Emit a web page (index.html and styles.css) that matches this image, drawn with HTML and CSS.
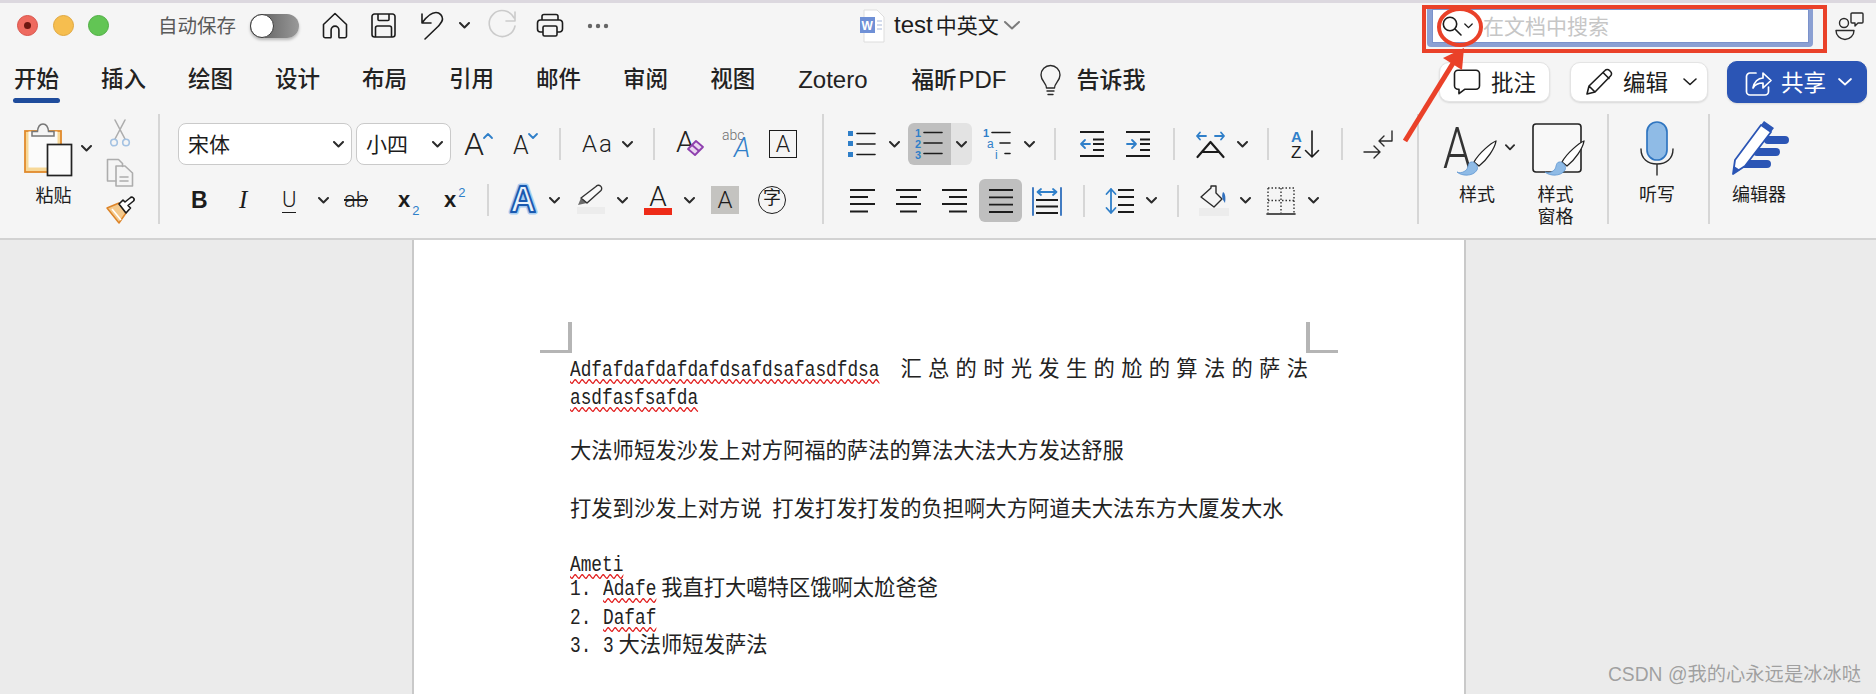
FILE: index.html
```html
<!DOCTYPE html>
<html lang="zh-CN">
<head>
    <meta charset="UTF-8">
    <title>test 中英文</title>
    <link rel="stylesheet" href="styles.css">
</head>
<body>

<svg class="defs" width="0" height="0">
    <symbol id="chev" viewBox="0 0 11 7"><path d="M1 1l4.5 4.5L10 1" class="ln-chev"/></symbol>
    <symbol id="brush" viewBox="0 0 40 36">
        <path d="M39 1C34 3 22 13 17 22l5 4C30 20 38 8 39 1z" class="brush-handle"/>
        <path d="M14 22c-4 1-2 7-6 9-3 2-6 2-8 1 4 4 16 5 20-2 2-3-2-9-6-8z" class="brush-head"/>
    </symbol>
</svg>

<div class="app">
    <div class="topline"></div>

    <!-- title bar -->
    <div class="titlebar">
        <div class="quick">
            <span class="light red"><i></i></span>
            <span class="light yellow"></span>
            <span class="light green"></span>
            <span class="autosave">自动保存</span>
            <span class="toggle"><i></i></span>
            <svg width="26" height="27" viewBox="0 0 26 27"><path class="ln" d="M1.5 12.5L13 1.5l11.5 11V24a1.8 1.8 0 0 1-1.8 1.8h-5a.8.8 0 0 1-.8-.8v-7a3.9 3.9 0 0 0-7.8 0v7a.8.8 0 0 1-.8.8h-5A1.8 1.8 0 0 1 1.5 24z"/></svg>
            <svg width="25" height="25" viewBox="0 0 25 25"><path class="ln" d="M3.5 1h18a2.5 2.5 0 0 1 2.5 2.500v18a2.500 2.500 0 0 1-2.500 2.500h-18A2.500 2.500 0 0 1 1 21.500v-18A2.500 2.500 0 0 1 3.500 1zM7 1v5.500a1 1 0 0 0 1 1h9a1 1 0 0 0 1-1V1M4.500 24v-9a2 2 0 0 1 2-2h12a2 2 0 0 1 2 2v9"/></svg>
            <svg width="24" height="29" viewBox="0 0 24 29"><path class="ln" d="M2 3v9h9M2 12C7 5 12 1.500 16 1.500c4 0 6.500 3.500 6.500 6.500s-2.500 5-4.500 7.500L5 28"/></svg>
            <svg class="chev"><use href="#chev"/></svg>
            <svg width="28" height="29" viewBox="0 0 28 29"><path class="ln-off" d="M26 7A13 13 0 1 0 27 15M27 1v9h-9"/></svg>
            <svg width="28" height="25" viewBox="0 0 28 25"><path class="ln" d="M6 7V3.500A2 2 0 0 1 8 1.500h12a2 2 0 0 1 2 2V7M7 19H4.500A3 3 0 0 1 1.500 16v-6a3 3 0 0 1 3-3h19a3 3 0 0 1 3 3v6a3 3 0 0 1-3 3H21M8.500 13h11a1.500 1.500 0 0 1 1.500 1.500v7a1.500 1.500 0 0 1-1.500 1.500h-11A1.500 1.500 0 0 1 7 21.500v-7A1.500 1.500 0 0 1 8.500 13z"/></svg>
            <svg width="22" height="6" viewBox="0 0 22 6"><circle cx="3" cy="3" r="2.200" class="dot"/><circle cx="11" cy="3" r="2.200" class="dot"/><circle cx="19" cy="3" r="2.200" class="dot"/></svg>
        </div>

        <div class="doctitle">
            <svg width="26" height="34" viewBox="0 0 26 34">
                <path d="M4 1h13l7 7v25H4z" class="page-ico"/>
                <rect x="0" y="8" width="15" height="16" class="word-box"/>
                <text x="1.500" y="21" class="word-w">W</text>
                <path d="M17 12h5M17 16h5M17 20h5" class="word-lines"/>
            </svg>
            <span class="doctitle-text"><span class="doctitle-lat">test</span>中英文</span>
            <svg width="16" height="9" viewBox="0 0 16 9"><path d="M1 1l7 6.500L15 1" class="ln-grey"/></svg>
        </div>

        <div class="search">
            <div class="search-box">
                <svg width="20" height="20" viewBox="0 0 20 20"><circle cx="8" cy="8" r="6.700" class="ln"/><path d="M13 13l6 6" class="ln"/></svg>
                <svg class="chev-sm" viewBox="0 0 11 7"><path d="M1 1l4.500 4.500L10 1" class="ln"/></svg>
                <span class="search-hint">在文档中搜索</span>
            </div>
        </div>

        <svg class="people" width="28" height="28" viewBox="0 0 28 28">
            <circle cx="8" cy="11" r="4.500" class="ln-thin"/>
            <path d="M0 18.500h18a9 9 0 0 1-18 0zM16 1h10a1 1 0 0 1 1 1v8a1 1 0 0 1-1 1h-4l-3 3v-3h-3a1 1 0 0 1-1-1V2a1 1 0 0 1 1-1z" class="ln-thin"/>
        </svg>
    </div>

    <!-- tabs -->
    <div class="tabbar">
        <div class="tabs">
            <span class="tab active">开始</span>
            <span class="tab">插入</span>
            <span class="tab">绘图</span>
            <span class="tab">设计</span>
            <span class="tab">布局</span>
            <span class="tab">引用</span>
            <span class="tab">邮件</span>
            <span class="tab">审阅</span>
            <span class="tab">视图</span>
            <span class="tab tab-lat tab-zotero">Zotero</span>
            <span class="tab tab-foxit">福昕<span class="tab-lat">PDF</span></span>
            <svg class="bulb" width="21" height="32" viewBox="0 0 21 32"><path class="ln-thin" d="M6.500 23c0-5-5.500-7-5.500-13a9.500 9.500 0 0 1 19 0c0 6-5.500 8-5.500 13zM7 26h7M8 29.500h5"/></svg>
            <span class="tab tab-tell">告诉我</span>
        </div>
        <div class="actions">
            <span class="btn btn-comment">
                <svg width="28" height="26" viewBox="0 0 28 26"><path class="ln" d="M5 1.200h18a3.500 3.500 0 0 1 3.500 3.500v12a3.500 3.500 0 0 1-3.500 3.500H12l-6 4.500v-4.500H5a3.500 3.500 0 0 1-3.500-3.500v-12A3.500 3.500 0 0 1 5 1.200z"/></svg>
                <span class="btn-text">批注</span>
            </span>
            <span class="btn btn-edit">
                <svg width="28" height="28" viewBox="0 0 28 28"><path class="ln" d="M2 26l2-8L20 2.500a3 3 0 0 1 4.500 0l1 1a3 3 0 0 1 0 4.500L10 24zM4 18l6 6M18 4.500l6 6"/></svg>
                <span class="btn-text">编辑</span>
                <svg class="chev-btn" viewBox="0 0 14 8"><path d="M1 1l6 5.500L13 1" class="ln"/></svg>
            </span>
            <span class="btn btn-share">
                <svg width="27" height="28" viewBox="0 0 27 28"><path class="ln-white" d="M11 5H5a3.500 3.500 0 0 0-3.500 3.500v15A3.500 3.500 0 0 0 5 27h15a3.500 3.500 0 0 0 3.500-3.500V19M8 20c1-6 5-10 10-10V5l8 7.500-8 7.500v-5c-4 0-8 1.500-10 5z"/></svg>
                <span class="btn-text">共享</span>
                <svg class="chev-btn" viewBox="0 0 14 8"><path d="M1 1l6 5.500L13 1" class="ln-white"/></svg>
            </span>
        </div>
    </div>

    <!-- ribbon -->
    <div class="ribbon">

        <div class="group g-clip">
            <div class="paste">
                <svg width="68" height="54" viewBox="0 0 68 54">
                    <rect x="1" y="8" width="36" height="41" class="board"/>
                    <rect x="4.500" y="8.500" width="29" height="36" class="board-in"/>
                    <path d="M8 13V8.500h5.500C14 3 16 1 19 1s5 2 5.500 7.500H30V13z" class="clip"/>
                    <rect x="23.500" y="21.500" width="24" height="31" class="sheet"/>
                    <use href="#chev" x="57" y="22" width="11" height="7"/>
                </svg>
                <span class="big-label paste-label">粘贴</span>
            </div>
            <div class="clip-tools">
                <svg width="28" height="28" viewBox="0 0 28 28">
                    <path d="M9 1l10 19M19 1L9 20" class="ln-scissor"/>
                    <circle cx="8" cy="23.500" r="3.300" class="ln-handle"/><circle cx="20" cy="23.500" r="3.300" class="ln-handle"/>
                </svg>
                <svg width="28" height="29" viewBox="0 0 28 29">
                    <path d="M10 23H1.500V1.500h11l4 4v3" class="ln-scissor"/>
                    <path d="M10 8h9l7.500 7v13H10zM14 19h8M14 23h8" class="ln-scissor"/>
                </svg>
                <svg width="28" height="27" viewBox="0 0 28 27">
                    <path d="M1 11l12-5 7 10-7 10z" class="broom"/>
                    <path d="M6 12l9 11" class="broom-white"/>
                    <path d="M13 7l4-4 2 2 5-4a2 2 0 0 1 3.500 3L22 8.500l2.500 2.500L20 16z" class="ln-white-fill"/>
                </svg>
            </div>
        </div>

        <div class="group g-font">
            <div class="row font-a">
                <span class="sel sel-font"><span class="sel-text">宋体</span><svg class="chev"><use href="#chev"/></svg></span>
                <span class="sel sel-size"><span class="sel-text">小四</span><svg class="chev"><use href="#chev"/></svg></span>
                <svg width="30" height="26" viewBox="0 0 30 26"><text x="0" y="24" class="a-thin a-32">A</text><path d="M20 7l4-4 4 4" class="ln-blue"/></svg>
                <svg width="28" height="26" viewBox="0 0 28 26"><text x="0" y="23" class="a-thin a-25">A</text><path d="M16 3l4 4 4-4" class="ln-blue"/></svg>
                <i class="vsep"></i>
                <span class="aa">Aa</span>
                <svg class="chev"><use href="#chev"/></svg>
                <i class="vsep"></i>
                <svg width="30" height="30" viewBox="0 0 30 30"><text x="0" y="23" class="a-thin a-31">A</text><path d="M12 20l8-8 7 6-8 8z" class="eraser"/><path d="M16 16l7 6" class="eraser"/></svg>
                <svg width="32" height="30" viewBox="0 0 32 30"><text x="0" y="11" class="abc">abc</text><text x="12" y="28" class="a-blue">A</text></svg>
                <span class="boxa">A</span>
            </div>
            <div class="row font-b">
                <span class="fmt fmt-b">B</span>
                <span class="fmt fmt-i">I</span>
                <span class="fmt fmt-u">U</span>
                <svg class="chev"><use href="#chev"/></svg>
                <span class="fmt fmt-s">ab</span>
                <span class="fmt fmt-x">x<sub>2</sub></span>
                <span class="fmt fmt-x">x<sup>2</sup></span>
                <i class="vsep"></i>
                <svg width="30" height="28" viewBox="0 0 30 28"><text x="1" y="26" class="a-fx1">A</text><text x="1" y="26" class="a-fx2">A</text></svg>
                <svg class="chev"><use href="#chev"/></svg>
                <svg width="30" height="30" viewBox="0 0 30 30">
                    <rect x="1" y="22" width="28" height="7" class="hl-bar"/>
                    <path d="M2 20l3-7 6 5z" class="hl-tip"/>
                    <path d="M5 13L20 1.500a3 3 0 0 1 5 4L11 18z" class="hl-pen"/>
                </svg>
                <svg class="chev"><use href="#chev"/></svg>
                <span class="colora"><span>A</span><i></i></span>
                <svg class="chev"><use href="#chev"/></svg>
                <span class="shadea">A</span>
                <span class="zi">字</span>
            </div>
        </div>

        <div class="group g-para">
            <div class="row para-a">
                <svg width="28" height="28" viewBox="0 0 28 28">
                    <rect x="0" y="1" width="5" height="5" class="sq"/><rect x="0" y="11" width="5" height="5" class="sq"/><rect x="0" y="22" width="5" height="5" class="sq"/>
                    <path d="M9 3.500h18M9 14h18M9 24.500h18" class="ln"/>
                </svg>
                <svg class="chev"><use href="#chev"/></svg>
                <span class="split">
                    <span class="split-main">
                        <svg width="28" height="30" viewBox="0 0 28 30">
                            <text x="0" y="8" class="num">1</text><text x="0" y="19" class="num">2</text><text x="0" y="29.500" class="num">3</text>
                            <path d="M9 3.500h18M9 14h18M9 24.500h18" class="ln"/>
                        </svg>
                    </span>
                    <span class="split-arrow"><svg class="chev"><use href="#chev"/></svg></span>
                </span>
                <svg width="28" height="30" viewBox="0 0 28 30">
                    <text x="0" y="8" class="num">1</text><text x="4" y="18.500" class="num-a">a</text><text x="12" y="29.500" class="num-a">i</text>
                    <path d="M9 3.500h18M17 14h10M22 24.500h5" class="ln"/>
                </svg>
                <svg class="chev"><use href="#chev"/></svg>
                <i class="vsep"></i>
                <svg width="26" height="28" viewBox="0 0 26 28"><path d="M1 2h24M14 9.500h11M14 14h11M14 20h11M1 26h24" class="ln-s"/><path d="M11 14H2M6 10l-4 4 4 4" class="ln-blue"/></svg>
                <svg width="26" height="28" viewBox="0 0 26 28"><path d="M1 2h24M15 9.500h10M15 14h10M15 20h10M1 26h24" class="ln-s"/><path d="M2 14h9M7 10l4 4-4 4" class="ln-blue"/></svg>
                <i class="vsep"></i>
                <svg width="29" height="28" viewBox="0 0 29 28"><path d="M1 6h9M4 2.500L1 6l3 3.500M19 6h9M25 2.500L28 6l-3 3.500" class="ln-blue"/><path d="M1.500 27L14.500 12l13 15M7 22h15" class="ln-b"/></svg>
                <svg class="chev"><use href="#chev"/></svg>
                <i class="vsep"></i>
                <svg width="29" height="29" viewBox="0 0 29 29"><text x="1" y="12" class="az-a">A</text><text x="1" y="28" class="az-z">Z</text><path d="M22 1v26M15.500 20.500L22 27l6.500-6.500" class="ln"/></svg>
                <i class="vsep"></i>
                <svg width="30" height="28" viewBox="0 0 30 28"><path d="M29 1v10H16.500M21 6l-5 5 5 5M1 22h15M11 16l6 6-6 6" class="ln-thin"/></svg>
            </div>
            <div class="row para-b">
                <svg width="26" height="26" viewBox="0 0 26 26"><path d="M0 2h25M0 9h18M0 16h25M0 23.500h18" class="ln-s"/></svg>
                <svg width="26" height="26" viewBox="0 0 26 26"><path d="M0 2h25M4 9h17M0 16h25M4 23.500h17" class="ln-s"/></svg>
                <svg width="26" height="26" viewBox="0 0 26 26"><path d="M0 2h25M7 9h18M0 16h25M7 23.500h18" class="ln-s"/></svg>
                <span class="pressed">
                    <svg width="26" height="26" viewBox="0 0 26 26"><path d="M1 2h24M1 9.300h24M1 16.600h24M1 24h24" class="ln-s"/></svg>
                </span>
                <svg width="30" height="28" viewBox="0 0 30 28"><path d="M1 1v27M29 1v27" class="ln-bl2"/><path d="M6 5h18M9 2L5.500 5 9 8M21 2l3.500 3L21 8" class="ln-blue"/><path d="M4 13h22M4 19.500h22M4 26h22" class="ln-s"/></svg>
                <i class="vsep"></i>
                <svg width="30" height="28" viewBox="0 0 30 28"><path d="M6 2v24M1.500 7L6 2l4.500 5M1.500 21L6 26l4.500-5" class="ln-blue"/><path d="M13 3h16M13 10h16M13 18h16M13 25h16" class="ln-s"/></svg>
                <svg class="chev"><use href="#chev"/></svg>
                <i class="vsep"></i>
                <svg width="30" height="31" viewBox="0 0 30 31"><rect x="0" y="23" width="30" height="8" class="hl-bar"/><path d="M2 12L12 3V1h5v7l6 6-8 8z" class="ln-thin"/><path d="M24 7c2 1 3 5 2 11-2-3-4-6-2-11z" class="fill-blue"/></svg>
                <svg class="chev"><use href="#chev"/></svg>
                <svg width="28" height="28" viewBox="0 0 28 28"><path d="M1 1h26v25M1 1v25M14 1v25M1 13.500h26" class="ln-dot"/><path d="M0 27h28" class="ln"/></svg>
                <svg class="chev"><use href="#chev"/></svg>
            </div>
        </div>

        <div class="group g-style">
            <div class="big big-style">
                <svg width="72" height="56" viewBox="0 0 72 56">
                    <text x="0" y="48" transform="scale(.78 1)" class="a-style">A</text>
                    <use href="#brush" x="14" y="20" width="40" height="36"/>
                    <use href="#chev" x="62" y="24" width="10" height="7"/>
                </svg>
                <span class="big-label">样式</span>
            </div>
            <div class="big big-pane">
                <svg width="54" height="56" viewBox="0 0 54 56">
                    <rect x="1" y="4" width="48" height="48" rx="3" class="pane"/>
                    <use href="#brush" x="13" y="20" width="40" height="36"/>
                </svg>
                <span class="big-label">样式<br>窗格</span>
            </div>
        </div>

        <div class="group g-dict">
            <div class="big">
                <svg width="34" height="56" viewBox="0 0 34 56">
                    <rect x="7" y="2" width="20" height="38" rx="10" class="mic"/>
                    <path d="M1 29c0 10 7 15 16 15s16-5 16-15M17 44v11" class="ln-thin"/>
                </svg>
                <span class="big-label">听写</span>
            </div>
        </div>

        <div class="group g-editor">
            <div class="big">
                <svg width="54" height="56" viewBox="0 0 54 56">
                    <path d="M36 20h17M25 32h19M11 44h24" class="ed-bars"/>
                    <path d="M1 54l2-14L29 5l10 7-26 34z" class="ed-pen"/>
                    <path d="M29 5l3-4 10 7-3 4zM1 54l1-8 6 4z" class="ed-cap"/>
                </svg>
                <span class="big-label">编辑器</span>
            </div>
        </div>
    </div>

    <!-- document -->
    <div class="docarea">
        <div class="page">
            <div class="crop">
                <i class="crop-l"></i>
                <i class="crop-r"></i>
            </div>
            <div class="text">
                <p class="para para-one"><span class="lat err">Adfafdafdafdafdsafdsafasdfdsa</span><span class="lat lat-gap"> </span>汇总的时光发生的尬的算法的萨法 <span class="lat err">asdfasfsafda</span></p>
                <p class="para para-two">大法师短发沙发上对方阿福的萨法的算法大法大方发达舒服</p>
                <p class="para">打发到沙发上对方说<span class="lat"> </span>打发打发打发的负担啊大方阿道夫大法东方大厦发大水</p>
                <p class="para ameti"><span class="lat err">Ameti</span></p>
                <div class="li li-first"><span class="num-col"><span class="lat">1.</span></span><span><span class="lat err">Adafe</span> 我直打大噶特区饿啊太尬爸爸</span></div>
                <div class="li"><span class="num-col"><span class="lat">2.</span></span><span><span class="lat err">Dafaf</span></span></div>
                <div class="li"><span class="num-col"><span class="lat">3.</span></span><span><span class="lat">3</span> 大法师短发萨法</span></div>
            </div>
        </div>
    </div>
</div>

<!-- red annotations over the screenshot -->
<svg class="marks" width="1876" height="694" viewBox="0 0 1876 694">
    <rect x="1424" y="7" width="401" height="44"/>
    <ellipse cx="1460" cy="27" rx="21" ry="18"/>
    <path d="M1405 141L1455 60"/>
    <polygon points="1464,48 1443,58 1462,70"/>
</svg>

<div class="watermark">CSDN @我的心永远是冰冰哒</div>

</body>
</html>
```

FILE: styles.css
```css
* {
    box-sizing: border-box;
}

html, body {
    margin: 0;
    height: 100%;
    overflow: hidden;
}

body {
    position: relative;
    font-family: "Liberation Sans", "Noto Sans CJK SC", sans-serif;
    color: #1c1c1c;
    background: #ebebeb;
}

svg {
    display: block;
    overflow: visible;
}

i {
    font-style: normal;
}

.defs {
    position: absolute;
}

.app {
    display: flex;
    flex-direction: column;
    height: 694px;
}

.topline {
    height: 3px;
    background: #dcd8df;
}

/* svg strokes */
.ln, .ln-s, .ln-b, .ln-thin, .ln-blue, .ln-chev, .ln-off, .ln-grey, .ln-white,
.ln-scissor, .ln-handle, .ln-dot, .ln-bl2 {
    fill: none;
    stroke-linecap: round;
    stroke-linejoin: round;
}
.ln { stroke: #1c1c1c; stroke-width: 1.6; }
.ln-s { stroke: #1c1c1c; stroke-width: 1.8; stroke-linecap: butt; }
.ln-b { stroke: #1c1c1c; stroke-width: 2.2; }
.ln-thin { stroke: #2a2a2a; stroke-width: 1.4; }
.ln-blue { stroke: #2f7fc9; stroke-width: 1.8; }
.ln-bl2 { stroke: #2f6fbd; stroke-width: 1.8; }
.ln-chev { stroke: #2b2b2b; stroke-width: 2; }
.ln-off { stroke: #cbcbcb; stroke-width: 1.6; }
.ln-grey { stroke: #7b7b7b; stroke-width: 2; }
.ln-white { stroke: #fff; stroke-width: 1.7; }
.ln-scissor { stroke: #adadad; stroke-width: 1.6; }
.ln-handle { stroke: #a4c2e2; stroke-width: 1.6; }
.ln-dot { stroke: #333; stroke-width: 1.4; stroke-dasharray: 1.5 2; stroke-linecap: butt; }
.dot { fill: #666; }
.chev { width: 11px; height: 7px; }

/* title bar */
.titlebar {
    display: flex;
    align-items: center;
    height: 45px;
    background: #f5f5f5;
}

.quick {
    display: grid;
    grid-template-columns: 36px 35px 71px 91px 72px 49px 49px 39px 29px 48px 51px auto;
    align-items: center;
    justify-items: start;
    width: 860px;
    padding-left: 17px;
}

.light {
    display: flex;
    align-items: center;
    justify-content: center;
    width: 21px;
    height: 21px;
    border-radius: 50%;
}
.light i {
    width: 7px;
    height: 7px;
    border-radius: 50%;
    background: #6d1710;
}
.red { background: #ee6a5f; border: 1px solid #d9534a; }
.yellow { background: #f6be4f; border: 1px solid #e0a73f; }
.green { background: #62c554; border: 1px solid #4fae43; }

.autosave {
    font-size: 19.5px;
    color: #5a5a5a;
    margin: 0 0 2px -1px;
    white-space: nowrap;
}

.toggle {
    display: flex;
    width: 49px;
    height: 24px;
    border-radius: 12px;
    background: linear-gradient(to right, #555, #999);
    box-shadow: 0 2px 3px rgba(0, 0, 0, .25);
}
.toggle i {
    width: 24px;
    height: 24px;
    border-radius: 50%;
    background: #fff;
    border: 1.5px solid #3a3a3a;
}

.doctitle {
    display: flex;
    align-items: center;
    width: 567px;
}
.doctitle-text {
    margin: 0 6px 3px 8px;
    font-size: 21px;
    width: 104px;
    white-space: nowrap;
}
.doctitle-lat {
    font-size: 24px;
    margin-right: 3px;
}
.page-ico { fill: #fff; stroke: #ddd; stroke-width: 1; }
.word-box { fill: #6f90d6; }
.word-w { font: bold 12px "Liberation Sans", sans-serif; fill: #fff; }
.word-lines { fill: none; stroke: #a8b8da; stroke-width: 1.2; }

.search {
    width: 386px;
    height: 42px;
    padding: 5px 5px 5px 6px;
    background: #8ba0d3;
    border-radius: 4px;
}
.search-box {
    display: flex;
    align-items: center;
    height: 32px;
    padding-left: 9px;
    background: #fff;
    box-shadow: 0 0 0 1px #7b92cb;
}
.chev-sm {
    width: 9px;
    height: 6px;
    margin: 0 10px 0 2px;
}
.search-hint {
    font-size: 21px;
    color: #c6c6c6;
    margin-bottom: 2px;
}

.people {
    margin-left: 23px;
}

/* tabs */
.tabbar {
    display: flex;
    align-items: flex-start;
    height: 60px;
    background: #f5f5f5;
    padding-right: 9px;
}

.tabs {
    display: flex;
    align-items: flex-start;
    gap: 42px;
    padding: 17px 0 0 14px;
}

.tab {
    font-size: 22.5px;
    font-weight: 500;
    line-height: 30px;
    white-space: nowrap;
    color: #222;
}
.tab.active::after {
    content: "";
    display: block;
    height: 5px;
    margin: 3px -1px 0;
    border-radius: 3px;
    background: #1f4c9c;
}
.tab-lat { font-size: 24px; }
.tab-zotero { margin-left: 1px; }
.tab-foxit { margin-left: 2px; }
.tab-foxit .tab-lat { margin-left: 2px; }
.bulb { margin: 0 0 0 -9px; }
.tab-tell { margin-left: -26px; font-size: 23px; }

.actions {
    display: flex;
    align-items: center;
    gap: 20px;
    margin: 13px 0 0 auto;
}

.btn {
    display: flex;
    align-items: center;
    height: 40px;
    font-size: 22.5px;
    background: #fff;
    border: 1px solid #e4e4e4;
    border-radius: 10px;
    box-shadow: 0 1px 2px rgba(0, 0, 0, .12);
    white-space: nowrap;
}
.btn-text { margin-bottom: 3px; }
.btn-comment { width: 111px; padding-left: 13px; gap: 10px; }
.btn-edit { width: 138px; padding-left: 14px; gap: 10px; }
.btn-share {
    width: 140px;
    height: 42px;
    padding-left: 17px;
    gap: 9px;
    margin-left: -1px;
    color: #fff;
    background: #2b55b5;
    border-color: #2b55b5;
}
.chev-btn {
    width: 14px;
    height: 8px;
    margin-left: 5px;
}
.btn-share .chev-btn { margin-left: 3px; }

/* ribbon */
.ribbon {
    display: flex;
    height: 132px;
    padding-top: 6px;
    background: #f5f5f5;
    border-bottom: 2px solid #d2d2d2;
}

.group {
    height: 110px;
    border-right: 2px solid #d6d6d6;
    flex: none;
}

.g-clip {
    display: flex;
    width: 160px;
    padding: 9px 0 0 24px;
}
.g-font { width: 664px; padding: 9px 0 0 18px; }
.g-para { width: 595px; padding: 9px 0 0 24px; }
.g-style { display: flex; width: 190px; padding-left: 24px; gap: 17px; }
.g-dict { display: flex; justify-content: center; width: 101px; padding-right: 3px; }
.g-editor { display: flex; border-right: 0; padding-left: 22px; }

.paste { width: 82px; }
.paste-label { display: block; width: 59px; text-align: center; margin-top: 5px; }
.clip-tools {
    display: flex;
    flex-direction: column;
    gap: 11px;
    margin-top: -4px;
}
.clip-tools svg:last-child { margin-top: -1px; }

.board { fill: #f7d898; stroke: #e08a2c; stroke-width: 1.8; }
.board-in { fill: #fbfbfb; }
.clip { fill: #f5f5f5; stroke: #777; stroke-width: 1.5; }
.sheet { fill: #fbfbfb; stroke: #222; stroke-width: 1.7; }
.broom { fill: #f4c98c; stroke: #dd8429; stroke-width: 1.5; stroke-linejoin: round; }
.broom-white { fill: none; stroke: #fff; stroke-width: 1.6; }
.ln-white-fill { fill: #fff; stroke: #1c1c1c; stroke-width: 1.6; stroke-linejoin: round; }

.row {
    display: grid;
    align-items: center;
    justify-items: start;
    height: 42px;
}

.font-a { grid-template-columns: 178px 108px 49px 46px 23px 40px 31px 23px 46px 47px auto; }
.font-b {
    grid-template-columns: 47px 43px 36px 26px 54px 46px 43px 22px 40px 27px 41px 27px 40px 27px 47px auto;
    margin: 14px 0 0 14px;
}
.para-a { grid-template-columns: 41px 19px 75px 41px 30px 25px 46px 48px 23px 41px 30px 23px 51px 22px auto; }
.para-b {
    grid-template-columns: 46px 46px 37px 53px 51px 22px 41px 31px 22px 41px 27px 41px auto;
    margin: 14px 0 0 2px;
}

.vsep {
    width: 2px;
    height: 32px;
    background: #d6d6d6;
}

.sel {
    display: flex;
    align-items: center;
    justify-content: space-between;
    height: 42px;
    padding: 0 7px 0 9px;
    font-size: 21px;
    background: #fff;
    border: 1px solid #cacaca;
    border-radius: 8px;
}
.sel-text { margin-bottom: 3px; }
.sel-font { width: 174px; }
.sel-size { width: 95px; }

.a-thin, .a-blue, .a-style, .abc {
    font-family: Roboto, "Liberation Sans", sans-serif;
    font-weight: 300;
}
.a-thin { fill: #222; }
.a-32 { font-size: 32px; }
.a-25 { font-size: 25px; }
.a-31 { font-size: 30px; }
.a-blue { font-size: 27px; font-style: italic; fill: #2f7fc9; }
.a-style { font-size: 58px; fill: #333; }
.abc { font-size: 14px; fill: #6e6e6e; }
.eraser { fill: #e9d6f0; stroke: #8e3fae; stroke-width: 1.8; stroke-linejoin: round; }

.aa {
    font: 300 24px Roboto, "Liberation Sans", sans-serif;
    letter-spacing: 2px;
}

.boxa {
    display: flex;
    align-items: center;
    justify-content: center;
    width: 28px;
    height: 28px;
    border: 1.8px solid #1c1c1c;
    font: 300 23px Roboto, "Liberation Sans", sans-serif;
}

.fmt { font-size: 22px; line-height: 28px; }
.fmt-b { font-size: 23px; font-weight: bold; margin: -1px 0 0 -1px; }
.fmt-i { font-family: "Liberation Serif", serif; font-style: italic; font-size: 25px; }
.fmt-u { border-bottom: 1.6px solid #1c1c1c; line-height: 24px; font-weight: 300; font-family: Roboto, sans-serif; }
.fmt-s { text-decoration: line-through; font-weight: 300; font-family: Roboto, sans-serif; }
.fmt-x { font-weight: bold; }
.fmt-x sub, .fmt-x sup {
    font-size: 13px;
    line-height: 0;
    font-weight: normal;
    color: #2f7fc9;
    margin-left: 2px;
}
.fmt-x sub { vertical-align: -8px; }
.fmt-x sup { vertical-align: 10px; }

.a-fx1, .a-fx2 {
    font: bold 36px "Liberation Sans", sans-serif;
    stroke-linejoin: round;
}
.a-fx1 { fill: none; stroke: #a9cdf0; stroke-width: 5; }
.a-fx2 { fill: #e8f2fb; stroke: #1a5ab0; stroke-width: 2; }

.hl-bar { fill: #ececec; }
.hl-tip { fill: #6b6b6b; }
.hl-pen { fill: #fafafa; stroke: #333; stroke-width: 1.4; stroke-linejoin: round; }

.colora {
    display: flex;
    flex-direction: column;
    align-items: center;
    width: 28px;
    font: 300 28px/22px Roboto, "Liberation Sans", sans-serif;
}
.colora i {
    width: 28px;
    height: 7px;
    background: #ee2b18;
}

.shadea {
    width: 28px;
    height: 28px;
    text-align: center;
    background: #c4c3c0;
    font: 300 24px/28px Roboto, "Liberation Sans", sans-serif;
}

.zi {
    width: 28px;
    height: 28px;
    border: 1.6px solid #1c1c1c;
    border-radius: 50%;
    font-size: 18px;
    line-height: 23px;
    text-align: center;
}

.sq { fill: #2f7fc9; }
.num { font: bold 11px "Liberation Sans", sans-serif; fill: #2f7fc9; }
.num-a { font: 12px "Liberation Sans", sans-serif; fill: #2f7fc9; }
.az-a { font: bold 15px "Liberation Sans", sans-serif; fill: #2f7fc9; }
.az-z { font: 17px "Liberation Sans", sans-serif; fill: #1c1c1c; }
.fill-blue { fill: #2f6fbd; }

.split {
    display: flex;
    width: 64px;
    height: 42px;
    border-radius: 6px;
    overflow: hidden;
}
.split-main {
    display: flex;
    align-items: center;
    width: 43px;
    padding-left: 7px;
    background: #bfbfbf;
}
.split-arrow {
    display: flex;
    align-items: center;
    justify-content: center;
    flex: 1;
    background: #e3e3e3;
}

.pressed {
    display: flex;
    align-items: center;
    justify-content: center;
    width: 43px;
    height: 43px;
    background: #bfbfbf;
    border-radius: 6px;
}

.big {
    display: flex;
    flex-direction: column;
    align-items: center;
    padding-top: 6px;
}
.big-label {
    margin-top: 8px;
    font-size: 18px;
    line-height: 22px;
    text-align: center;
}
.big-style .big-label { margin-right: 4px; }
.big-pane .big-label { margin-right: 7px; }

.brush-handle { fill: #fff; stroke: #222; stroke-width: 1.3; stroke-linejoin: round; }
.brush-head { fill: #8fbbe6; stroke: #5f97d2; stroke-width: .8; }
.pane { fill: #f8f8f8; stroke: #222; stroke-width: 1.6; }
.mic { fill: #8fbbe6; stroke: #2f75c0; stroke-width: 1.7; }
.ed-bars { fill: none; stroke: #2b55b5; stroke-width: 8; stroke-linecap: round; }
.ed-pen { fill: #fff; stroke: #2b55b5; stroke-width: 1.8; stroke-linejoin: round; }
.ed-cap { fill: #2b55b5; }

/* document */
.docarea {
    flex: 1;
    overflow: hidden;
    background: #ebebeb;
}

.page {
    width: 1054px;
    height: 100%;
    margin-left: 412px;
    padding: 82px 126px 0;
    background: #fff;
    border-left: 2px solid #c9c9c9;
    border-right: 2px solid #c9c9c9;
}

.crop {
    display: flex;
    justify-content: space-between;
    height: 31px;
}
.crop i {
    width: 32px;
    border-bottom: 3px solid #b5b5b5;
}
.crop-l { border-right: 4px solid #b5b5b5; }
.crop-r { border-left: 4px solid #b5b5b5; }

.text {
    padding: 0 30px;
    font: 21.3px/27.5px "Noto Sans CJK SC", sans-serif;
    color: #222;
}

.para {
    margin: 0 0 27.5px;
    text-align: justify;
}
.para-one { margin-bottom: 26px; }
.para-two { margin-bottom: 31px; }
.ameti {
    height: 24px;
    margin: 27.5px 0 0;
}

/* half-width latin of the document font: narrow and tall */
.lat {
    display: inline-block;
    font-family: "Liberation Mono", monospace;
    font-size: 17.8px;
    line-height: 1;
    white-space: pre;
    transform: scaleY(1.25);
    transform-origin: 50% 80%;
}
.lat-gap { margin-right: 4px; }
.err {
    text-decoration: underline wavy #e11a1a;
    text-decoration-thickness: 1.2px;
    text-underline-offset: 2px;
}

.li {
    display: flex;
}
.li-first { margin-bottom: 1px; }
.num-col {
    width: 33px;
    flex: none;
}

/* overlays */
.marks {
    position: absolute;
    left: 0;
    top: 0;
    pointer-events: none;
}
.marks rect, .marks ellipse, .marks path {
    fill: none;
    stroke: #ea4129;
    stroke-width: 4;
}
.marks path { stroke-width: 5; }
.marks polygon { fill: #ea4129; }

.watermark {
    position: absolute;
    right: 15px;
    bottom: 7px;
    font-size: 19.3px;
    color: rgba(110, 110, 110, .6);
    white-space: nowrap;
}
```
